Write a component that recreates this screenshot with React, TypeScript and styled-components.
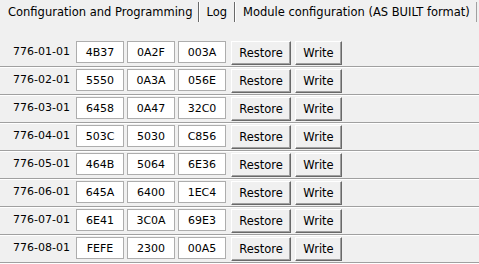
import React from "react";
import styled, { createGlobalStyle } from "styled-components";

const GlobalStyle = createGlobalStyle`
  html, body {
    margin: 0;
    padding: 0;
    background: #f0f0f0;
  }
  body {
    font-family: "DejaVu Sans", "Liberation Sans", sans-serif;
    font-size: 11px;
    color: #000;
  }
`;

const Window = styled.div`
  width: 479px;
  height: 264px;
  overflow: hidden;
  background: #f0f0f0;
`;

const TabStrip = styled.div`
  display: flex;
  height: 22px;
  padding-top: 2px;
  box-sizing: border-box;
  font-size: 11.5px;
`;

const Tab = styled.div<{ $active?: boolean; $first?: boolean }>`
  display: flex;
  align-items: center;
  height: 20px;
  padding-left: ${(p) => (p.$first ? "8px" : p.$active ? "7px" : "6px")};
  padding-right: ${(p) => (p.$active ? "6px" : p.$first ? "6px" : "7px")};
  border-left: ${(p) => (p.$first ? "none" : "1px solid #ffffff")};
  border-right: 1px solid ${(p) => (p.$active ? "#a0a0a0" : "#696969")};
  white-space: nowrap;
  box-sizing: border-box;
`;

const Rows = styled.div`
  padding-top: 17px;
`;

const Row = styled.div`
  display: flex;
  align-items: flex-start;
  height: 28px;
  box-sizing: border-box;
  padding-top: 2px;
  border-bottom: 1px solid #a0a0a0;
  box-shadow: 0 1px 0 #ffffff;
`;

const Label = styled.div`
  width: 70px;
  text-align: right;
  padding-top: 4px;
  margin-right: 6px;
`;

const ValueBox = styled.div<{ $gap?: number }>`
  width: 48px;
  height: 22px;
  box-sizing: border-box;
  border: 1px solid #adadad;
  background: #ffffff;
  display: flex;
  align-items: center;
  justify-content: center;
  margin-right: ${(p) => p.$gap ?? 3}px;
`;

const Button = styled.button<{ $w: number }>`
  width: ${(p) => p.$w}px;
  height: 24px;
  margin: 0 4px 0 0;
  padding: 0;
  font-family: inherit;
  font-size: 11.5px;
  color: #000;
  background: #f0f0f0;
  box-sizing: border-box;
  border-style: solid;
  border-width: 1px;
  border-color: #ffffff #696969 #696969 #ffffff;
  box-shadow: inset -1px -1px 0 #a0a0a0;
`;

const data = [
  ["776-01-01", "4B37", "0A2F", "003A"],
  ["776-02-01", "5550", "0A3A", "056E"],
  ["776-03-01", "6458", "0A47", "32C0"],
  ["776-04-01", "503C", "5030", "C856"],
  ["776-05-01", "464B", "5064", "6E36"],
  ["776-06-01", "645A", "6400", "1EC4"],
  ["776-07-01", "6E41", "3C0A", "69E3"],
  ["776-08-01", "FEFE", "2300", "00A5"],
];

export default function App() {
  return (
    <Window>
      <GlobalStyle />
      <TabStrip>
        <Tab $first>Configuration and Programming</Tab>
        <Tab>Log</Tab>
        <Tab $active>Module configuration (AS BUILT format)</Tab>
      </TabStrip>
      <Rows>
        {data.map(([id, a, b, c]) => (
          <Row key={id}>
            <Label>{id}</Label>
            <ValueBox>{a}</ValueBox>
            <ValueBox>{b}</ValueBox>
            <ValueBox $gap={5}>{c}</ValueBox>
            <Button $w={60}>Restore</Button>
            <Button $w={47}>Write</Button>
          </Row>
        ))}
      </Rows>
    </Window>
  );
}
